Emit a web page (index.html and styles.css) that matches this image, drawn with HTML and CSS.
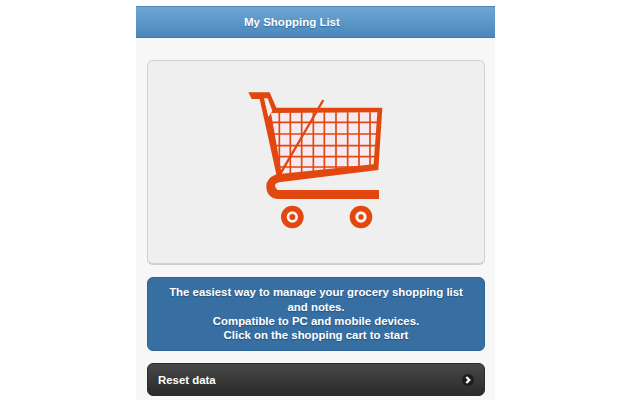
FILE: index.html
```html
<!DOCTYPE html>
<html lang="en">
<head>
<meta charset="utf-8">
<title>My Shopping List</title>
<link rel="stylesheet" href="styles.css">
</head>
<body>
<div class="app">
  <header class="header"><h1 class="title">My Shopping List</h1></header>
  <main class="content">
    <div class="card">
      <svg class="cart" viewBox="0 0 480 450" aria-label="Shopping cart">
        <path class="tint" d="M100 80H430L418 240L130 270Z"/>
        <g class="grid">
          <path d="M133 82V262M166 82V268M200 82V264M235 82V260M268 82V256M303 82V252M338 82V248M372 82V244M405 82V240"/>
          <path d="M98 112H432M105 147H430M112 182H428M120 215H426M128 246H424"/>
        </g>
        <path class="fill" d="M40 22H104L124 68H442L430 255L132 292L122 296Q116 306 128 315H432V342H128Q94 338 94 304Q94 280 124 268L74 42H50ZM87 40L98 40L112 78L100 96ZM108 84L427 82L416 238L140 266Z" fill-rule="evenodd"/>
        <path class="diag" d="M265 45L135 268"/>
        <circle class="fill" cx="172" cy="396" r="34"/>
        <circle class="hole" cx="172" cy="396" r="17"/>
        <circle class="fill" cx="172" cy="396" r="9"/>
        <circle class="fill" cx="378" cy="396" r="34"/>
        <circle class="hole" cx="378" cy="396" r="17"/>
        <circle class="fill" cx="378" cy="396" r="8"/>
      </svg>
    </div>
    <div class="info">
      <p class="info-text">The easiest way to manage your grocery shopping list and notes.<br>Compatible to PC and mobile devices.<br>Click on the shopping cart to start</p>
    </div>
    <div class="reset">
      <span>Reset data</span>
      <svg class="chevron" viewBox="0 0 18 18" aria-hidden="true">
        <circle cx="9" cy="9" r="9"/>
        <path d="M6.5 4.5L11 9L6.5 13.5"/>
      </svg>
    </div>
  </main>
</div>
</body>
</html>
```
FILE: styles.css
```css
html, body {
  margin: 0;
  height: 400px;
  overflow: hidden;
  background: #fff;
  font-family: "Liberation Sans", Arial, sans-serif;
}
body {
  padding: 6px 0 0 136px;
  box-sizing: border-box;
}
.app {
  width: 359px;
  height: 394px;
  background: #f7f7f7;
  display: flex;
  flex-direction: column;
}
.header {
  height: 32px;
  box-sizing: border-box;
  border-top: 1px solid #4d87b8;
  border-bottom: 1px solid #3f79ad;
  background: linear-gradient(#6fa6d3, #4a87bb);
  display: flex;
  align-items: center;
  padding-left: 108px;
  flex: none;
}
.title {
  margin: 0;
  font-size: 11.5px;
  font-weight: 700;
  color: #fff;
  text-shadow: 0 1px 1px #2f6a9e;
}
.content {
  padding: 22px 10px 0 11px;
  display: flex;
  flex-direction: column;
}
.card {
  height: 205px;
  box-sizing: border-box;
  border: 1px solid #d0d0d0;
  border-bottom: 2px solid #cfcfcf;
  border-radius: 6px;
  background: #efefef;
  padding-top: 24px;
}
.cart {
  display: block;
  width: 160px;
  height: 150px;
  margin: 0 auto;
  position: relative;
  left: -1px;
}
.fill { fill: #e2470f; }
.hole { fill: #f7f3f0; }
.tint { fill: #f4eaf0; }
.grid path {
  fill: none;
  stroke: #e2470f;
  stroke-width: 5;
}
.diag {
  fill: none;
  stroke: #e2470f;
  stroke-width: 7;
}
.info {
  margin-top: 12px;
  height: 74px;
  box-sizing: border-box;
  border-radius: 6px;
  background: #376fa2;
  border: 1px solid #2f6596;
  display: flex;
  align-items: center;
  justify-content: center;
  padding: 0 12px;
}
.info-text {
  margin: 0;
  text-align: center;
  font-size: 11.4px;
  line-height: 14.4px;
  font-weight: 700;
  color: #fff;
  text-shadow: 0 1px 1px #24507a;
}
.reset {
  margin-top: 12px;
  height: 33px;
  box-sizing: border-box;
  border-radius: 6px;
  background: linear-gradient(#484848, #2a2a2a);
  border: 1px solid #2b2b2b;
  display: flex;
  align-items: center;
  justify-content: space-between;
  padding: 0 10px;
  font-size: 11.4px;
  font-weight: 700;
  color: #fff;
}
.chevron {
  width: 12px;
  height: 12px;
}
.chevron circle { fill: #1e1e1e; }
.chevron path {
  fill: none;
  stroke: #fff;
  stroke-width: 3.4;
}
```
